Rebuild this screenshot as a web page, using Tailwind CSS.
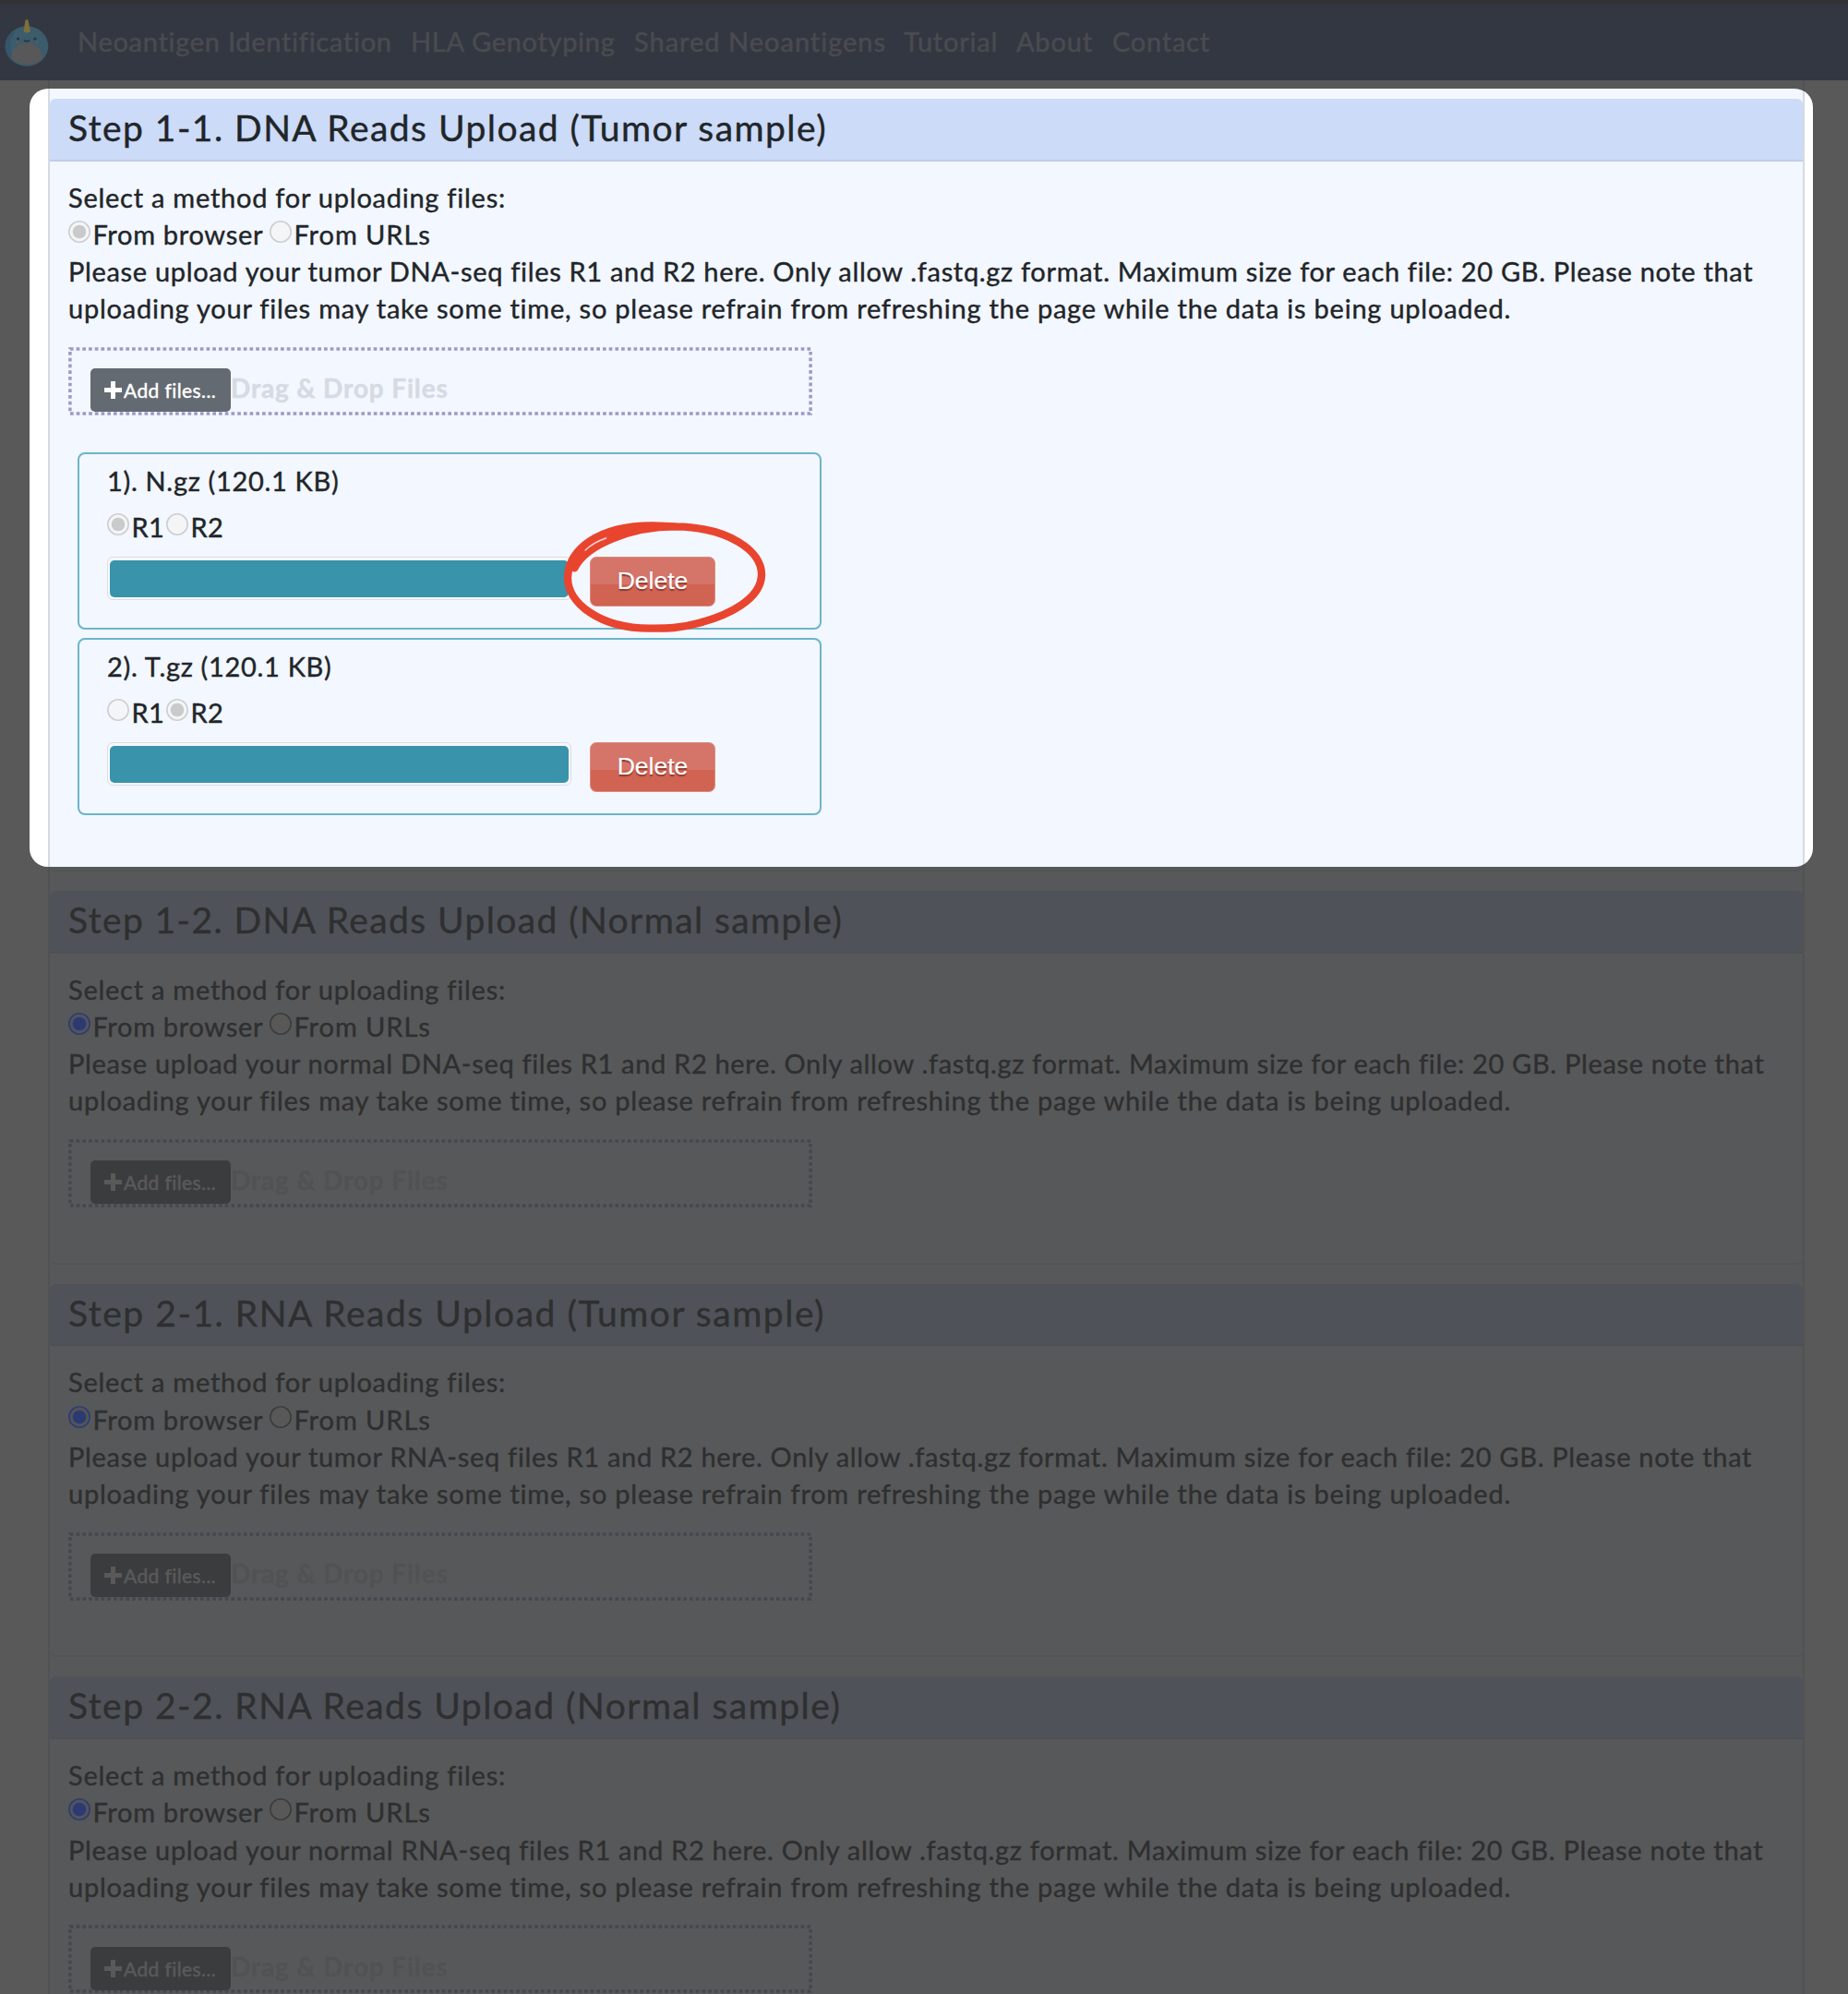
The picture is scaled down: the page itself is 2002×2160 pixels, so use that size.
<!DOCTYPE html>
<html lang="en">
<head>
<meta charset="utf-8">
<title>Neoantigen Identification</title>
<script src="https://cdn.jsdelivr.net/npm/@tailwindcss/browser@4"></script>
</head>
<body class="relative h-[2160px] w-[2002px] overflow-hidden bg-white font-['Lato',sans-serif] text-[29px] leading-[40.33px] text-[#212529] [-webkit-text-stroke:0.4px]">

<nav class="flex h-[87px] items-center border-t-4 border-[#333836] bg-[#3b4f88] text-[#acb6cb]">
  <svg class="relative z-20 ml-1 mt-px h-[58px] w-[50px] shrink-0" viewBox="0 0 50 58">
    <ellipse cx="25" cy="33" rx="23.3" ry="21.7" fill="#3c5c6c"/>
    <path d="M7 19A23.3 21.7 0 0 0 12 51C5 38 6 27 13 15Z" fill="#36556a"/>
    <path d="M8 46C9 24 41 24 42 46A23.3 21.7 0 0 1 8 46Z" fill="#585858"/>
    <path d="M21.500 17L23.500 5Q25 3 26.500 5L29 17Q25 20 21.500 17Z" fill="#7c6f3c"/>
    <circle cx="15.500" cy="25" r="1.600" fill="#28343b"/><circle cx="34" cy="25" r="1.600" fill="#28343b"/>
    <path d="M22.500 27Q25 28.500 27.500 27" fill="none" stroke="#28343b" stroke-width="1.600" stroke-linecap="round"/>
    <circle cx="14.500" cy="28.500" r="1.500" fill="#5c5a66"/><circle cx="35.500" cy="28.500" r="1.500" fill="#5c5a66"/>
  </svg>
  <div class="-mt-px ml-[30px] flex whitespace-nowrap">
    <span class="w-[361px] tracking-[0.72px]">Neoantigen Identification</span>
    <span class="w-[242px] tracking-[0.7px]">HLA Genotyping</span>
    <span class="w-[292px] tracking-[1px]">Shared Neoantigens</span>
    <span class="w-[122px] tracking-[0.8px]">Tutorial</span>
    <span class="w-[104px] tracking-[0.8px]">About</span>
    <span class="tracking-[0.75px]">Contact</span>
  </div>
</nav>

<main id="steps" class="ml-[52px] flex h-[2100px] w-[1903px] flex-col gap-[21px] border-x-2 border-[#d5dae3] bg-[#f3f7ff] pt-5"></main>

<!-- spotlight over the first step, everything around it is dimmed -->
<div class="pointer-events-none absolute left-8 top-24 z-10 h-[843px] w-[1932px] rounded-[20px] shadow-[0_0_0_2400px_rgba(50,50,50,0.806)]"></div>

<!-- hand-drawn ring around the first Delete button -->
<svg class="pointer-events-none absolute left-[560px] top-[480px] z-20 h-[420px] w-[360px]" viewBox="0 0 1080 1260" fill="none" stroke="#e9442e" stroke-width="25" stroke-linecap="round" stroke-linejoin="round">
  <path d="M187 406C225 330 370 271 515 271C690 275 796 350 795 428C794 508 685 560 590 585C520 604 480 602 430 602C270 602 165 520 165 437C168 345 265 268 440 268L515 271"/>
  <path d="M187 400L186 375L208 368Z" fill="#e9442e" stroke-width="8"/>
  <path d="M300 299L400 270L440 281L340 300Z" fill="#e9442e" stroke-width="4"/>
  <path d="M222 348Q250 322 290 309" stroke="#f3d5d4" stroke-width="4"/>
</svg>

<script>
const steps = [
  { title: 'Step 1-1. DNA Reads Upload (Tumor sample)', kind: 'tumor DNA-seq', heading: 'tracking-[1.45px]', text: 'tracking-[0.67px]', files: [
    { name: '1). N.gz (120.1 KB)', read: 1, progress: 100 },
    { name: '2). T.gz (120.1 KB)', read: 2, progress: 100 } ] },
  { title: 'Step 1-2. DNA Reads Upload (Normal sample)', kind: 'normal DNA-seq', heading: 'tracking-[1.4px]', text: 'tracking-[0.67px]' },
  { title: 'Step 2-1. RNA Reads Upload (Tumor sample)', kind: 'tumor RNA-seq', heading: 'tracking-[1.53px]', text: 'tracking-[0.69px]' },
  { title: 'Step 2-2. RNA Reads Upload (Normal sample)', kind: 'normal RNA-seq', heading: 'tracking-[1.48px]', text: 'tracking-[0.69px]' },
];

function radio(on, disabled) {
  const ring = disabled ? '#cdced1' : on ? '#2c3c78' : '#3c3c3c';
  const fill = disabled ? '#f4f5f6' : on ? '#545456' : '#585858';
  const dot = disabled ? '#c9cacc' : '#2c3a74';
  return `<svg class="relative z-20 -mt-[6px] mr-[2.500px] h-6 w-6 shrink-0" viewBox="0 0 24 24">
    <circle cx="12" cy="12" r="11.200" fill="${fill}" stroke="${ring}" stroke-width="1.600"/>
    ${on ? `<circle cx="12" cy="12" r="7.300" fill="${dot}"/>` : ''}</svg>`;
}

function fileCard(f) {
  return `<div class="h-[192.5px] w-[806px] rounded-lg border-2 border-[#6bb6c8] pl-[30px] pt-[9px]">
    <div class="tracking-[0.68px]">${f.name}</div>
    <div class="mt-[10px] flex items-center tracking-[0.3px]">
      ${radio(f.read === 1, true)}<span class="w-[37.500px]">R1</span>${radio(f.read === 2, true)}<span>R2</span>
    </div>
    <div class="mt-[11.500px] flex items-start gap-[20px]">
      <div class="h-[47px] w-[503px] rounded-md border border-[#dcdde0] bg-[#f6f8fc] px-[2px] py-[3px]">
        <div class="h-[40px] rounded-[5px] bg-[#3993ab]" style="width:${f.progress}%"></div>
      </div>
      <button class="h-[54px] w-[136px] rounded-[7px] border border-[#dd8a80] bg-linear-to-b from-[#d57469] from-[56%] to-[#d16353] to-[56%] pb-px font-['Liberation_Sans',sans-serif] text-[26.5px] leading-none text-white [-webkit-text-stroke:0.2px] [text-shadow:0_2px_1px_#8f3a30]">Delete</button>
    </div>
  </div>`;
}

document.getElementById('steps').innerHTML = steps.map(s => {
  const disabled = !!s.files;
  return `<section class="${disabled ? 'h-[837px]' : 'h-[404.7px]'} shrink-0 rounded-md border-b-2 border-[#dfe3ea]">
    <h2 class="h-[67.500px] rounded-t-md border-b-2 border-[#c1cde9] bg-[#ccdbf8] pl-5 pt-[9px] text-[39px] leading-[44px] ${s.heading}">${s.title}</h2>
    <div class="pl-5 pt-[19px] whitespace-nowrap">
      <div class="tracking-[0.75px]">Select a method for uploading files:</div>
      <div class="flex items-center tracking-[0.7px]">
        ${radio(true, disabled)}<span class="w-[191.500px]">From browser</span>${radio(false, disabled)}<span class="tracking-[0.95px]">From URLs</span>
      </div>
      <p><span class="${s.text}">Please upload your ${s.kind} files R1 and R2 here. Only allow .fastq.gz format. Maximum size for each file: 20 GB. Please note that</span><br>
      <span class="tracking-[0.765px]">uploading your files may take some time, so please refrain from refreshing the page while the data is being uploaded.</span></p>
      <div class="relative mt-[21px] flex h-[74px] w-[806px] items-start pl-6 pt-[23.500px]">
        <svg class="absolute inset-0 h-full w-full" viewBox="0 0 806 74"><rect x="1.900" y="1.900" width="802.200" height="70.200" fill="none" stroke="#9c9bc6" stroke-width="3.500" stroke-dasharray="3.700 3.010"/></svg>
        <button class="relative flex h-[47px] w-[152px] items-center rounded-[5px] bg-[#646a71] pl-[15px] text-[21px] leading-none tracking-[0.4px] text-white">
          <svg class="mr-[2px] h-[19px] w-[19px]" viewBox="0 0 19 19"><path d="M7 0h5v7h7v5h-7v7H7v-7H0V7h7z" fill="#fff"/></svg>Add files...
        </button>
        <span class="mt-px text-[28px] font-bold tracking-[0.85px] text-[#d6dae2]">Drag &amp; Drop Files</span>
      </div>
      ${disabled ? `<div class="ml-[10px] mt-10 flex flex-col gap-[8.500px]">${s.files.map(fileCard).join('')}</div>` : ''}
    </div>
  </section>`;
}).join('');
</script>
</body>
</html>
